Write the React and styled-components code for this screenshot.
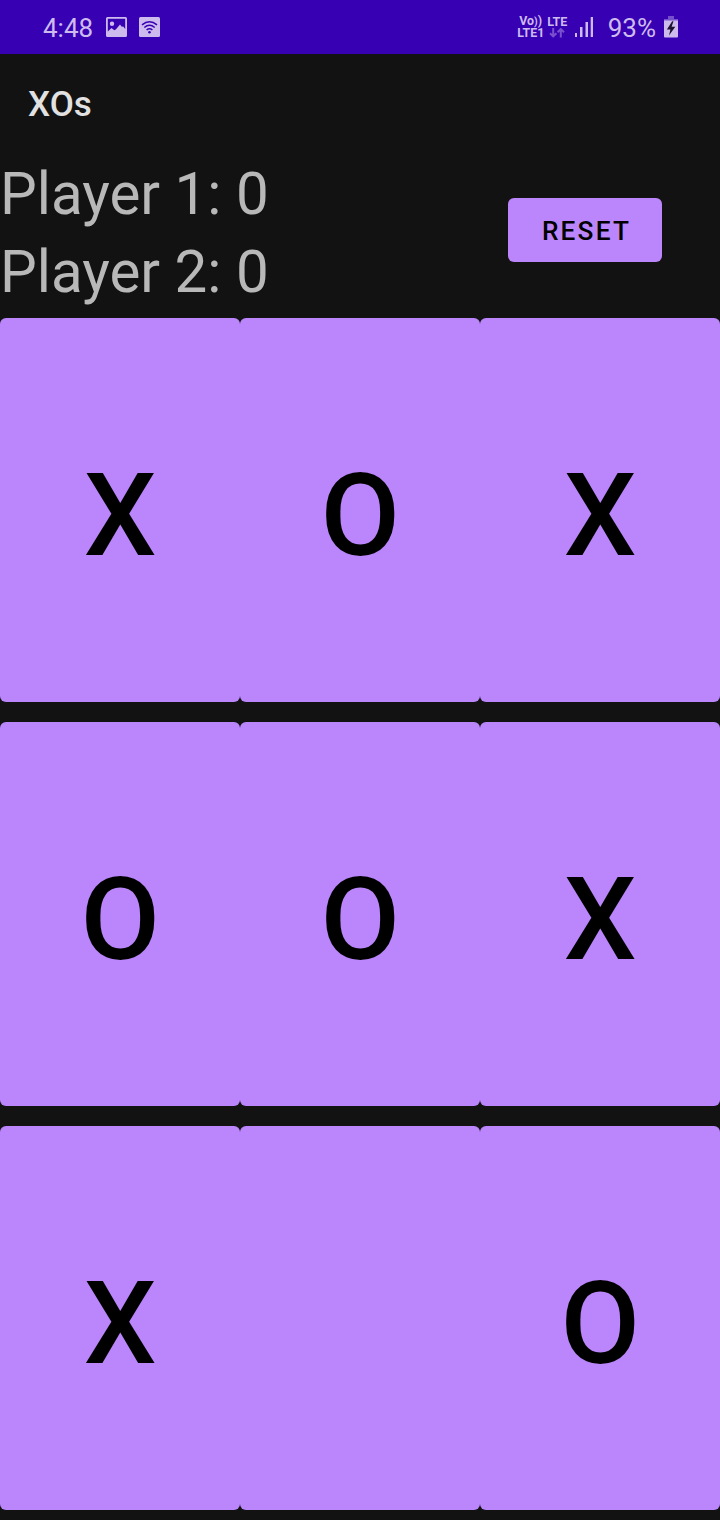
import React from "react";
import styled, { createGlobalStyle } from "styled-components";

const GlobalStyle = createGlobalStyle`
  * { box-sizing: border-box; }
  body {
    margin: 0;
    background: #121212;
    font-family: Roboto, "Liberation Sans", sans-serif;
  }
`;

const Screen = styled.div`
  width: 720px;
  height: 1520px;
  overflow: hidden;
  display: flex;
  flex-direction: column;
  background: #121212;
`;

const StatusBar = styled.header`
  height: 54px;
  flex: none;
  display: flex;
  justify-content: space-between;
  padding: 0 42px 0 43px;
  background: #3700b3;
  color: #cdbbee;
`;

const StatusGroup = styled.div`
  display: flex;
  align-items: center;
`;

const StatusText = styled.span`
  font-size: 26px;
  line-height: 54px;
  padding-top: 2px;
  white-space: nowrap;
  margin-right: ${(p) => p.$gap}px;
`;

const StatusIcon = styled.svg`
  display: block;
  flex: none;
  margin-right: ${(p) => p.$gap || 0}px;
`;

const NetworkLabel = styled.div`
  display: flex;
  flex-direction: column;
  align-items: center;
  width: ${(p) => p.$width}px;
  margin-right: ${(p) => p.$gap}px;
  font-size: ${(p) => p.$size}px;
  font-weight: 700;
  line-height: 12px;
  white-space: nowrap;
`;

const Wave = styled.span`
  font-size: ${(p) => p.$size}px;
  line-height: 1;
`;

const AppBar = styled.div`
  height: 101px;
  flex: none;
  display: flex;
  align-items: center;
  padding: 0 28px;
`;

const Title = styled.h1`
  margin: 0;
  font-size: 35px;
  font-weight: 500;
  line-height: 42px;
  color: #e1e1e1;
`;

const ScorePanel = styled.section`
  height: 163px;
  flex: none;
  display: flex;
  justify-content: space-between;
  padding-right: 58px;
`;

const Scores = styled.div`
  display: flex;
  flex-direction: column;
`;

const Score = styled.div`
  font-size: 58.3px;
  line-height: 78px;
  color: #b8b8b8;
  white-space: nowrap;
`;

const ResetButton = styled.button`
  width: 154px;
  height: 64px;
  margin-top: 43px;
  padding: 2px 0 0 3px;
  border: 0;
  border-radius: 6px;
  background: #bb86fc;
  color: #000;
  font-family: inherit;
  font-size: 26.2px;
  font-weight: 500;
  letter-spacing: 2.2px;
`;

const Board = styled.main`
  display: grid;
  grid-template-columns: repeat(3, 240px);
  grid-auto-rows: 384px;
  row-gap: 20px;
`;

const Cell = styled.button`
  padding: 12px 0 0 0.6px;
  border: 0;
  border-radius: 6px;
  background: #bb86fc;
  color: #000;
  font-family: inherit;
  font-size: 115.4px;
  font-weight: 500;
  line-height: 136px;
`;

const marks = ["X", "O", "X", "O", "O", "X", "X", "", "O"];

function PictureIcon() {
  return (
    <StatusIcon $gap={12} width="21" height="20" viewBox="0 0 21 20">
      <path
        fill="currentColor"
        fillRule="evenodd"
        d="M1.500 0h18Q21 0 21 1.500v17Q21 20 19.500 20h-18Q0 20 0 18.500v-17Q0 0 1.500 0ZM1.800 1.800v12.700l3.700-3.500 1.500 1.200 1.500 1 1.500-1 4-4.700 2 2.500 1-.8 2.200 2.800V1.800ZM6 4.500a2.200 2.200 0 1 1 0 4.400 2.200 2.200 0 0 1 0-4.400Z"
      />
    </StatusIcon>
  );
}

function WifiIcon() {
  return (
    <StatusIcon width="21" height="20" viewBox="0 0 21 20">
      <rect width="21" height="20" rx="1.500" fill="currentColor" />
      <g fill="none" stroke="#3700b3" strokeWidth="1.500">
        <path d="M3 7.900Q10.500 1.700 18 7.900" />
        <path d="M5.300 10.500Q10.500 6 15.700 10.500" />
        <path d="M7.600 13Q10.500 10.500 13.400 13" />
      </g>
      <circle cx="10.500" cy="15.200" r="1.300" fill="#3700b3" />
    </StatusIcon>
  );
}

function DataArrows() {
  return (
    <StatusIcon width="16" height="10" viewBox="0 0 16 10">
      <path
        d="M4.200 0v8.300M1 5.200 4.200 8.400l3.200-3.200M11.800 9.500V1.200M8.600 4.300 11.800 1.100l3.200 3.200"
        fill="none"
        stroke="#7a50cf"
        strokeWidth="2"
      />
    </StatusIcon>
  );
}

function SignalIcon() {
  return (
    <StatusIcon $gap={15} width="18" height="20" viewBox="0 0 18 20">
      <path
        d="M0 16h2v4H0zM5 10h2.500v10H5zM10.500 5H13v15h-2.500zM15.700 0H18v20h-2.300z"
        fill="currentColor"
      />
    </StatusIcon>
  );
}

function BatteryIcon() {
  return (
    <StatusIcon width="14" height="22" viewBox="0 0 14 22">
      <path d="M4 0h6v3h4v2H0V3h4z" fill="#7650cc" />
      <path d="M0 4.500h14V20.500q0 1-1 1H1q-1 0-1-1z" fill="currentColor" />
      <path d="M8.200 5.300 2.900 13.500H6.400L5 19.500 11.300 10.700H7.600L9.500 5.300z" fill="#1c1330" />
    </StatusIcon>
  );
}

export default function App() {
  return (
    <Screen>
      <GlobalStyle />
      <StatusBar>
        <StatusGroup>
          <StatusText $gap={13}>4:48</StatusText>
          <PictureIcon />
          <WifiIcon />
        </StatusGroup>
        <StatusGroup>
          <NetworkLabel $width={28} $gap={2} $size={12.4}>
            <span>
              Vo<Wave $size={10.5}>)</Wave>
              <Wave $size={12.4}>)</Wave>
            </span>
            <span>LTE1</span>
          </NetworkLabel>
          <NetworkLabel $width={21} $gap={7} $size={12.5}>
            <span>LTE</span>
            <DataArrows />
          </NetworkLabel>
          <SignalIcon />
          <StatusText $gap={8}>93%</StatusText>
          <BatteryIcon />
        </StatusGroup>
      </StatusBar>
      <AppBar>
        <Title>XOs</Title>
      </AppBar>
      <ScorePanel>
        <Scores>
          <Score>Player 1: 0</Score>
          <Score>Player 2: 0</Score>
        </Scores>
        <ResetButton>RESET</ResetButton>
      </ScorePanel>
      <Board>
        {marks.map((mark, i) => (
          <Cell key={i}>{mark}</Cell>
        ))}
      </Board>
    </Screen>
  );
}
